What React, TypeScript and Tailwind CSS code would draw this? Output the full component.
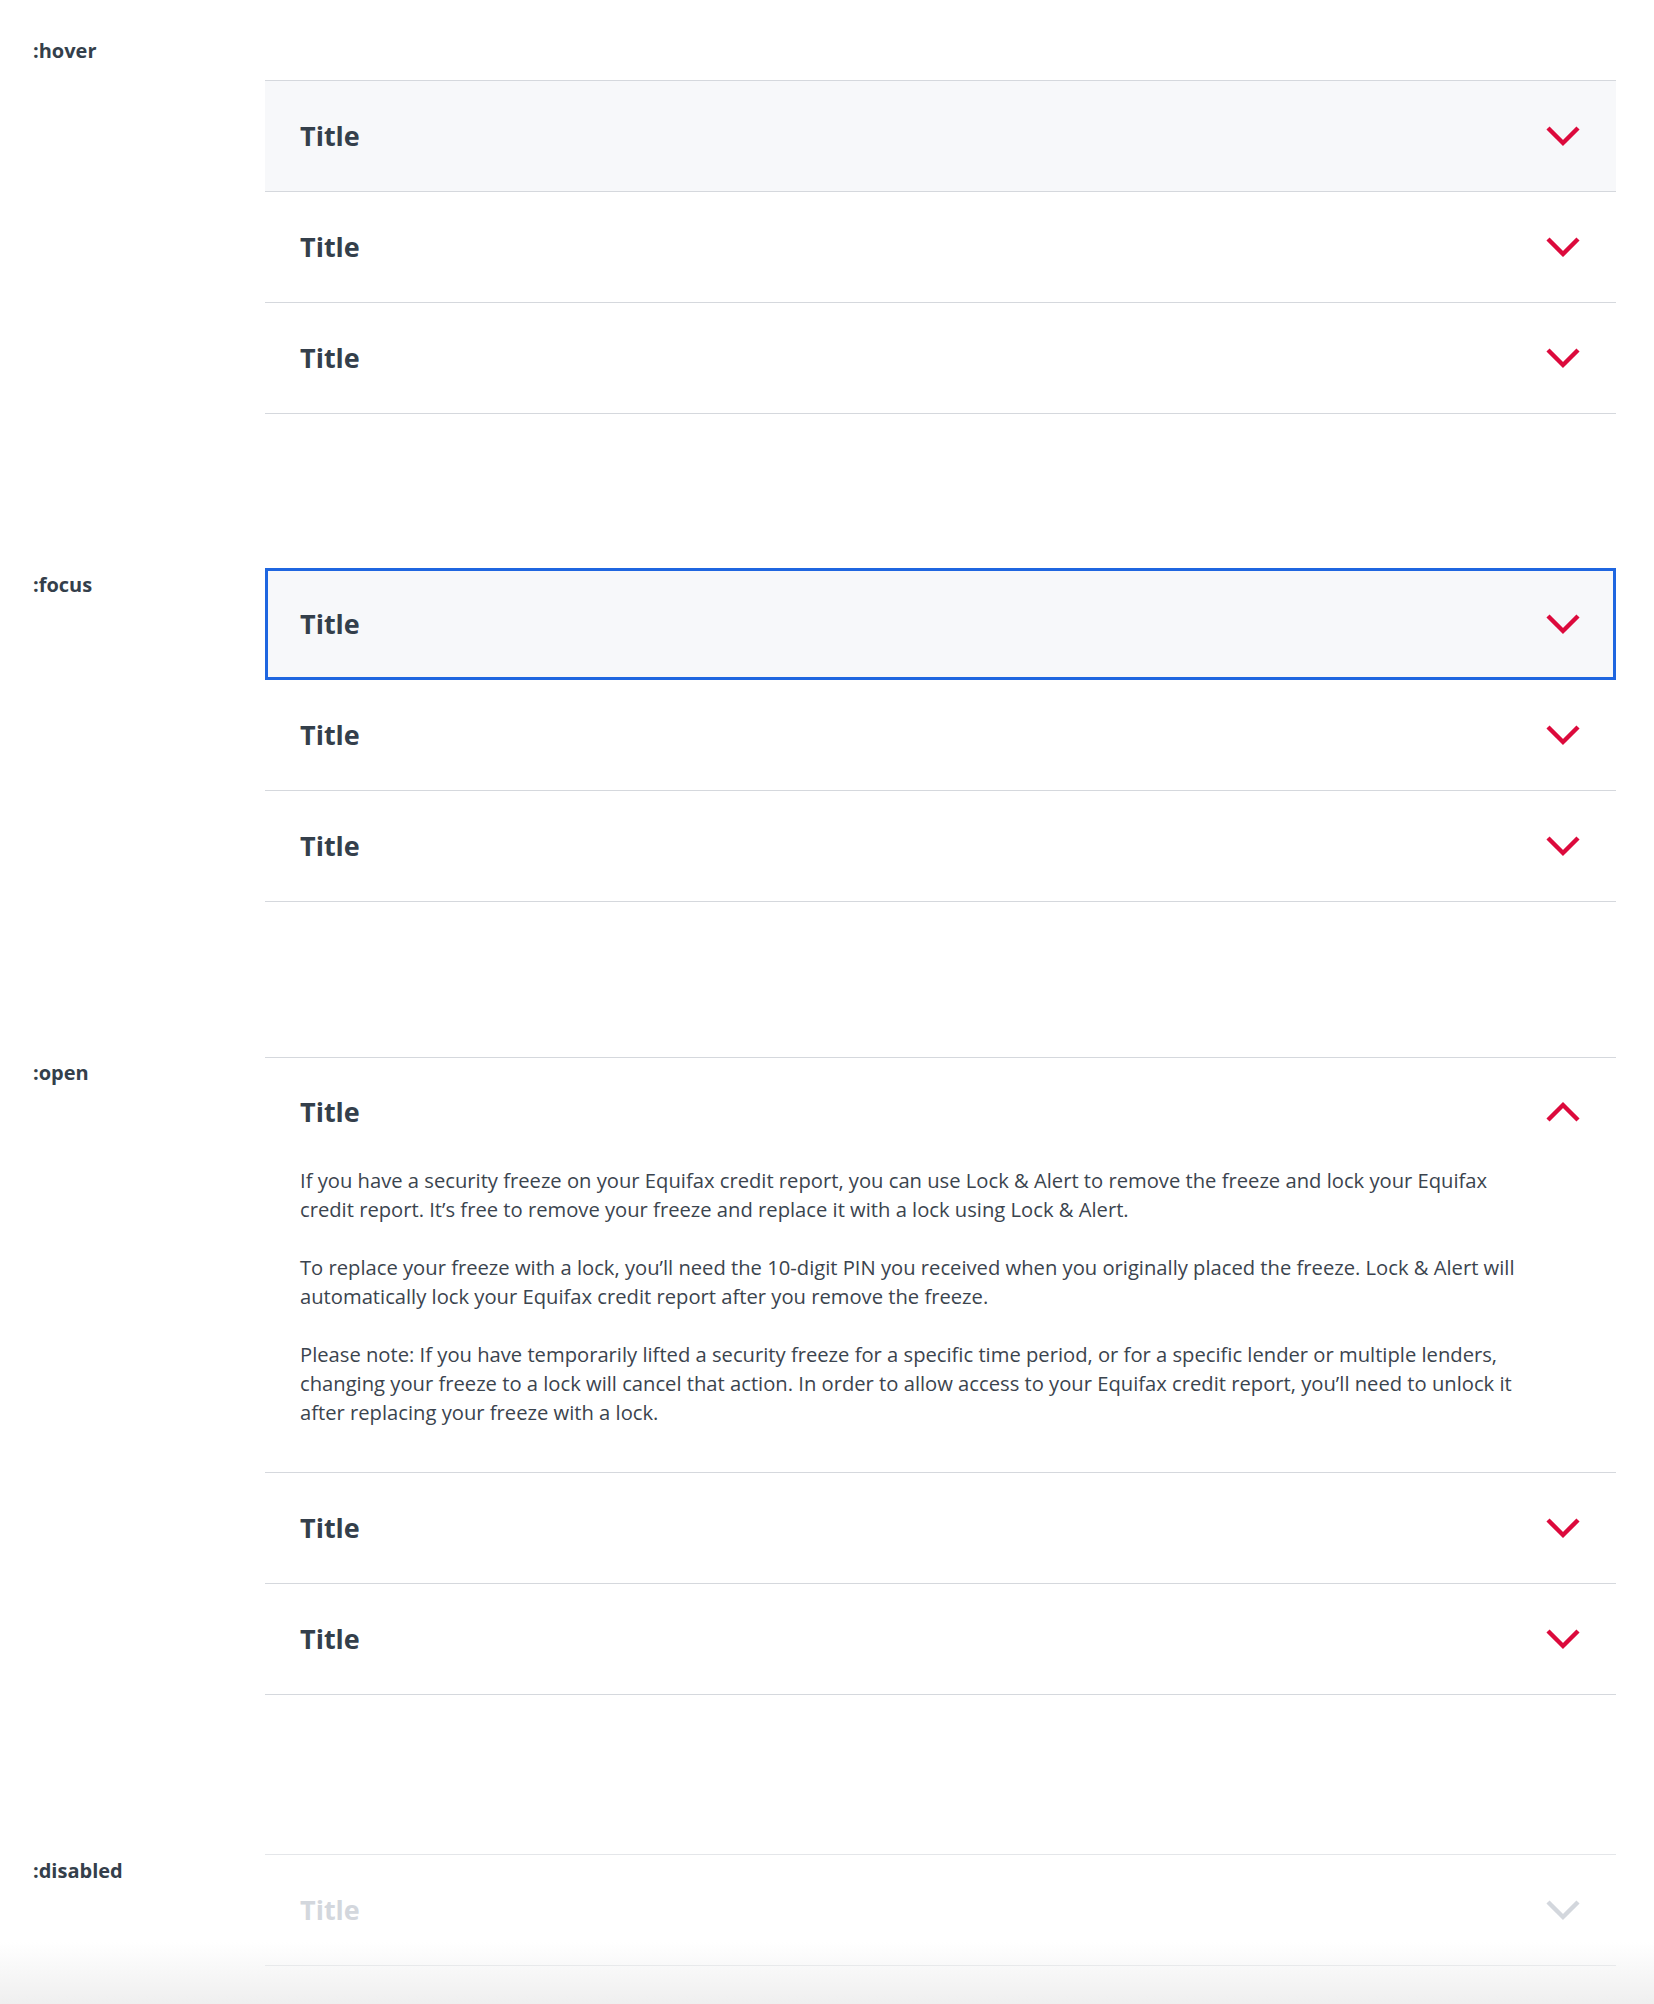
const ink = 'text-[#343f4b]'

function Chevron({ up = false, disabled = false }: { up?: boolean; disabled?: boolean }) {
  return (
    <svg
      width="38"
      height="24"
      viewBox="0 0 38 24"
      fill="none"
      className={disabled ? 'text-[#d3d7dd]' : 'text-[#dc0a3c]'}
    >
      <polyline
        points={up ? '4,20 19,5 34,20' : '4,4 19,19 34,4'}
        stroke="currentColor"
        strokeWidth="4.4"
        strokeLinejoin="miter"
      />
    </svg>
  )
}

function Row({
  hover = false,
  focus = false,
  disabled = false,
}: {
  hover?: boolean
  focus?: boolean
  disabled?: boolean
}) {
  if (focus) {
    return (
      <div className="flex h-[112px] items-center justify-between border-[3px] border-[#1f66e0] bg-[#f7f8fa] pl-[32px] pr-[31px]">
        <span className={`text-[27px] font-bold ${ink}`}>Title</span>
        <Chevron />
      </div>
    )
  }
  return (
    <div
      className={`flex h-[111px] items-center justify-between border-b pl-[35px] pr-[34px] ${
        disabled ? 'border-[#e4e6e9]' : 'border-[#d5d8dd]'
      } ${hover ? 'bg-[#f7f8fa]' : 'bg-white'}`}
    >
      <span
        className={`text-[27px] font-bold ${disabled ? 'text-[#d3d7dd]' : 'text-[#343f4b]'}`}
      >
        Title
      </span>
      <Chevron disabled={disabled} />
    </div>
  )
}

function OpenRow() {
  return (
    <div className="border-b border-[#d5d8dd]">
      <div className="flex h-[108px] items-center justify-between pl-[35px] pr-[34px]">
        <span className={`text-[27px] font-bold ${ink}`}>Title</span>
        <Chevron up />
      </div>
      <div className="flex flex-col gap-[28px] pb-[44px] pl-[35px] pr-[20px] text-[20.2px] leading-[29.4px] text-[#3b444e]">
        <p>
          If you have a security freeze on your Equifax credit report, you can use Lock &amp; Alert to remove the freeze and lock your Equifax
          <br />
          credit report. It’s free to remove your freeze and replace it with a lock using Lock &amp; Alert.
        </p>
        <p>
          To replace your freeze with a lock, you’ll need the 10-digit PIN you received when you originally placed the freeze. Lock &amp; Alert will
          <br />
          automatically lock your Equifax credit report after you remove the freeze.
        </p>
        <p>
          Please note: If you have temporarily lifted a security freeze for a specific time period, or for a specific lender or multiple lenders,
          <br />
          changing your freeze to a lock will cancel that action. In order to allow access to your Equifax credit report, you’ll need to unlock it
          <br />
          after replacing your freeze with a lock.
        </p>
      </div>
    </div>
  )
}

function Section({
  label,
  className,
  labelClass,
  listClass,
  children,
}: {
  label: string
  className: string
  labelClass: string
  listClass: string
  children: React.ReactNode
}) {
  return (
    <section className={`flex items-start ${className}`}>
      <div className={`w-[265px] shrink-0 pl-[33px] text-[20px] font-bold leading-[28px] ${ink} ${labelClass}`}>
        {label}
      </div>
      <div className={`w-[1351px] ${listClass}`}>{children}</div>
    </section>
  )
}

export default function App() {
  return (
    <div className="relative min-h-[2004px] overflow-hidden bg-white font-['Open_Sans','Noto_Sans',sans-serif]">
      <Section label=":hover" className="pt-[37px]" labelClass="" listClass="mt-[43px] border-t border-[#d5d8dd]">
        <Row hover />
        <Row />
        <Row />
      </Section>

      <Section label=":focus" className="mt-[154px]" labelClass="mt-[3px]" listClass="">
        <Row focus />
        <Row />
        <Row />
      </Section>

      <Section label=":open" className="mt-[155px]" labelClass="mt-[2px]" listClass="border-t border-[#d5d8dd]">
        <OpenRow />
        <Row />
        <Row />
      </Section>

      <Section label=":disabled" className="mt-[159px]" labelClass="mt-[3px]" listClass="border-t border-[#e4e6e9]">
        <Row disabled />
      </Section>

      {/* bottom fade of the screenshot */}
      <div className="pointer-events-none absolute bottom-0 left-0 right-0 h-[62px] bg-linear-to-b from-white/0 to-[#efefef]" />
    </div>
  )
}
